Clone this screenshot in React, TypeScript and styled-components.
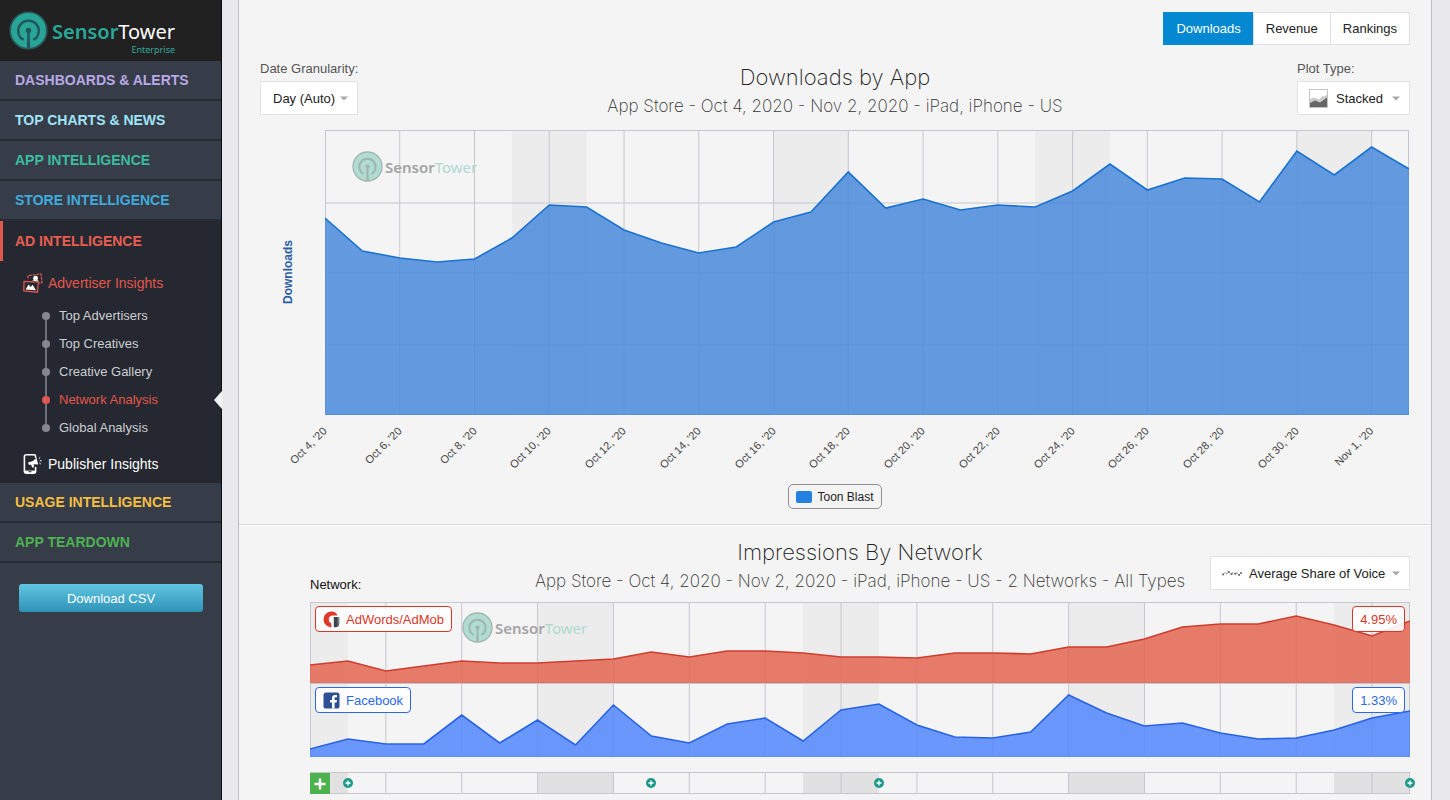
import React from "react";
import styled, { createGlobalStyle, css } from "styled-components";

const SANS = `"Helvetica Neue", "Liberation Sans", Arial, sans-serif`;
const LIGHT = `Inter, "Liberation Sans", sans-serif`;
const LOGO = `"Noto Sans", "Open Sans", sans-serif`;

const GlobalStyle = createGlobalStyle`
  *, *::before, *::after { box-sizing: border-box; }
  body { margin: 0; background: #e9e9ed; font-family: ${SANS}; font-size: 13px; color: #222; }
  button, select { font: inherit; color: inherit; }
  ul { list-style: none; margin: 0; padding: 0; }
  a { color: inherit; text-decoration: none; }
`;

const Page = styled.div`
  display: flex;
  height: 100vh;
  overflow: hidden;
`;

/* ---------- Sidebar ---------- */

const Sidebar = styled.aside`
  flex: 0 0 222px;
  background: #363c48;
  border-right: 1px solid #0c0d10;
`;

const Brand = styled.a`
  display: flex;
  align-items: center;
  gap: 4px;
  height: 61px;
  padding-left: 9px;
  background: #212121;
`;

const BrandText = styled.span`
  display: flex;
  flex-direction: column;
  align-items: flex-end;
  padding-top: 12px;
  font-family: ${LOGO};
`;

const BrandName = styled.span`
  font-size: 20px;
  line-height: 26px;
  color: #fff;
  b {
    font-weight: 600;
    color: #29a898;
  }
`;

const BrandTier = styled.span`
  font-size: 9px;
  line-height: 10px;
  color: #35a99a;
`;

const Category = styled.a<{ $color: string; $active?: boolean }>`
  display: flex;
  align-items: center;
  height: 40px;
  padding-left: 15px;
  font-size: 14px;
  font-weight: bold;
  color: ${(p) => p.$color};
  border-bottom: 2px solid #262b34;
  ${(p) =>
    p.$active &&
    css`
      padding-left: 12px;
      border-left: 3px solid #e2574c;
      border-bottom: 0;
    `}
`;

const OpenGroup = styled.div`
  background: #252830;
`;

const GroupLink = styled.a<{ $color: string }>`
  display: flex;
  align-items: center;
  gap: 5px;
  height: 41px;
  padding: 2px 0 0 23px;
  font-size: 14px;
  color: ${(p) => p.$color};
`;

const Leaf = styled.li<{ $current?: boolean }>`
  position: relative;
  height: 28px;
  padding-left: 59px;
  font-size: 13px;
  line-height: 28px;
  color: ${(p) => (p.$current ? "#e2574c" : "#ccced2")};

  &::before {
    content: "";
    position: absolute;
    left: 45px;
    top: 0;
    bottom: 0;
    width: 2px;
    background: #6d7077;
  }
  &:first-child::before { top: 14px; }
  &:last-child::before { bottom: 14px; }

  &::after {
    content: "";
    position: absolute;
    left: 42px;
    top: 10px;
    width: 8px;
    height: 8px;
    border-radius: 50%;
    background: ${(p) => (p.$current ? "#e2574c" : "#85888e")};
  }
`;

const Notch = styled.span`
  position: absolute;
  right: -1px;
  top: 5px;
  border: solid transparent;
  border-width: 9px 8px 9px 0;
  border-right-color: #f4f4f4;
`;

const CsvButton = styled.button`
  display: block;
  width: calc(100% - 37px);
  height: 28px;
  margin: 21px 18px 0 19px;
  padding: 0;
  border: 0;
  border-radius: 3px;
  background: linear-gradient(#5fc6e2, #2f93b6);
  color: #fff;
`;

/* ---------- Main panel ---------- */

const Panel = styled.main`
  flex: 1;
  min-width: 0;
  margin: 0 18px 0 16px;
  background: #f4f4f4;
  border: solid #bdbdc4;
  border-width: 0 1px;
`;

const Section = styled.section<{ $second?: boolean }>`
  ${(p) =>
    p.$second
      ? css`
          padding: 12px 21px 6px 71px;
          border-top: 1px solid #d9d9d9;
          box-shadow: inset 0 1px 0 #fff;
        `
      : css`
          padding: 12px 21px 15px;
        `}
`;

const Tabs = styled.div`
  display: flex;
  justify-content: flex-end;
`;

const Tab = styled.button<{ $active?: boolean }>`
  height: 33px;
  margin-left: -1px;
  padding: 0 12px;
  border: 1px solid ${(p) => (p.$active ? "#0388d1" : "#dfdfe2")};
  background: ${(p) => (p.$active ? "#0388d1" : "#fff")};
  color: ${(p) => (p.$active ? "#fff" : "#222")};
`;

const Head = styled.header<{ $alignEnd?: boolean }>`
  display: grid;
  grid-template-columns: 1fr auto 1fr;
  align-items: ${(p) => (p.$alignEnd ? "end" : "start")};
`;

const Titles = styled.div<{ $compact?: boolean }>`
  padding: ${(p) => (p.$compact ? "0 0 7px" : "17px 0 0")};
  text-align: center;
  font-family: ${LIGHT};
`;

const Title = styled.h2`
  margin: 0;
  font-size: 22px;
  font-weight: 200;
  line-height: 30px;
  color: #222;
`;

const Subtitle = styled.p`
  margin: 0;
  font-size: 17px;
  font-weight: 200;
  line-height: 28px;
  color: #333;
`;

const Field = styled.div<{ $end?: boolean }>`
  display: flex;
  flex-direction: column;
  align-items: flex-start;
  gap: 4px;
  padding-top: 16px;
  justify-self: ${(p) => (p.$end ? "end" : "start")};
  label {
    line-height: 16px;
    color: #555;
  }
`;

const SelectBox = styled.span<{ $width: number }>`
  display: grid;
  align-items: center;
  width: ${(p) => p.$width}px;
  height: 34px;
  > * {
    grid-area: 1 / 1;
  }
  > svg {
    pointer-events: none;
    z-index: 1;
  }
`;

const SelectInput = styled.select<{ $icon?: boolean }>`
  appearance: none;
  width: 100%;
  height: 100%;
  padding: 0 20px 0 ${(p) => (p.$icon ? 38 : 12)}px;
  border: 1px solid #e2e2e4;
  border-radius: 0;
  background: #fff;
  color: #222;
`;

const CaretSvg = styled.svg`
  justify-self: end;
  margin-right: 10px;
`;

const LeadIcon = styled.span`
  display: flex;
  margin-left: 12px;
  z-index: 1;
  pointer-events: none;
`;

const NetworkLabel = styled.h3`
  margin: 0;
  padding-bottom: 8px;
  font-size: 13px;
  font-weight: normal;
  line-height: 18px;
  color: #111;
`;

const VoiceField = styled.div`
  justify-self: end;
  padding-bottom: 12px;
`;

/* ---------- Charts ---------- */

const PlotRow = styled.div`
  display: flex;
  margin-top: 10px;
  padding-right: 1px;
`;

const YLabel = styled.div`
  flex: 0 0 65px;
  height: 285px;
  display: flex;
  align-items: center;
  padding-left: 21px;
  font-size: 12px;
  font-weight: bold;
  color: #2a5ea4;
  span {
    writing-mode: vertical-rl;
    transform: rotate(180deg);
  }
`;

const PlotColumn = styled.div`
  flex: 1;
  min-width: 0;
`;

const Plot = styled.div<{ $height: number }>`
  position: relative;
  height: ${(p) => p.$height}px;
`;

const ChartSvg = styled.svg`
  display: block;
  width: 100%;
  height: 100%;
`;

const Ticks = styled.div`
  display: flex;
  height: 69px;
  margin: 0 5px 0 -5px;
  padding-top: 9px;
`;

const Tick = styled.div`
  flex: 0 0 calc(200% / 29);
  display: flex;
`;

const TickText = styled.span`
  width: 0;
  display: flex;
  justify-content: flex-end;
  font-size: 11px;
  line-height: 14px;
  color: #444;
  span {
    white-space: nowrap;
    transform: rotate(-45deg);
    transform-origin: top right;
  }
`;

const Legend = styled.div`
  display: flex;
  justify-content: center;
`;

const LegendItem = styled.button`
  display: flex;
  align-items: center;
  gap: 5px;
  height: 25px;
  padding: 0 7px;
  border: 1px solid #909090;
  border-radius: 5px;
  background: transparent;
  font-size: 12px;
  color: #222;
`;

const Swatch = styled.span`
  width: 16px;
  height: 12px;
  border-radius: 2px;
  background: #2481e0;
`;

const Watermark = styled.div<{ $left: number; $top: number }>`
  position: absolute;
  left: ${(p) => p.$left}px;
  top: ${(p) => p.$top}px;
  display: flex;
  align-items: center;
  gap: 2px;
  font-family: ${LOGO};
  font-size: 15px;
  line-height: 30px;
  color: #aedace;
  b {
    font-weight: 600;
    color: #a3a3a5;
  }
`;

const Badge = styled.div<{ $color: string; $side: "left" | "right" }>`
  position: absolute;
  top: 4px;
  ${(p) => p.$side}: 5px;
  display: flex;
  align-items: center;
  gap: 6px;
  height: 26px;
  padding: 0 7px;
  border: 1px solid ${(p) => p.$color};
  border-radius: 4px;
  background: rgba(255, 255, 255, 0.9);
  font-size: 13px;
  color: ${(p) => p.$color};
`;

const Timeline = styled.div`
  position: relative;
  height: 22px;
  margin-top: 15px;
`;

const AddButton = styled.button`
  position: absolute;
  left: 0;
  top: 1px;
  width: 20px;
  height: 21px;
  display: grid;
  place-items: center;
  padding: 0;
  border: 0;
  background: #4db34f;
`;

const Marker = styled.button`
  position: absolute;
  top: 6px;
  width: 10px;
  height: 10px;
  margin-left: -5px;
  display: flex;
  padding: 0;
  border: 0;
  border-radius: 50%;
  background: #1d998b;
`;

/* ---------- Drawings ---------- */

function TowerMark({ size, fill, line, rim }: { size: number; fill: string; line: string; rim: string }) {
  return (
    <svg width={size} height={size} viewBox="0 0 38 38" aria-hidden="true">
      <circle cx="19" cy="19" r="17.8" fill={fill} stroke={rim} strokeWidth="1.6" />
      <path d="M14.2 28.200A10 10 0 1 1 23.800 28.200" fill="none" stroke={line} strokeWidth="2.400" />
      <circle cx="19" cy="19" r="2.600" fill={line} />
      <path d="M17.900 19h2.200l.5 17.400h-3.200z" fill={line} />
    </svg>
  );
}

function PhotosIcon() {
  return (
    <svg width="20" height="20" viewBox="0 0 20 20" fill="none" aria-hidden="true">
      <path d="M5 5.6V2.6L18 .9l1 8.8-3 .3" stroke="#e2574c" strokeWidth="1.2" strokeDasharray="3 .8" />
      <circle cx="12.6" cy="5.2" r="2.4" fill="#fff" />
      <path d="M9 7.2l3-1 4 1.8-1 .8z" fill="#fff" />
      <path d="M1 8.400l14.400.8-1 10L.8 17.800z" fill="#252830" stroke="#e2574c" strokeWidth="1.300" />
      <path d="M2.600 16.600l3-5.200 2.200 2.600 1.800-2.200 3.400 5.400z" fill="#fff" />
    </svg>
  );
}

function PhoneIcon() {
  return (
    <svg width="20" height="20" viewBox="0 0 20 20" fill="none" aria-hidden="true">
      <path d="M12.6 4V2.4A1.6 1.6 0 0 0 11 .8H3A1.6 1.6 0 0 0 1.4 2.4v15.2A1.6 1.6 0 0 0 3 19.2h8a1.6 1.6 0 0 0 1.6-1.6V13" stroke="#fff" strokeWidth="1.6" />
      <path d="M1.4 16.6h11.2v2.4H1.4z" fill="#fff" />
      <path d="M5.5 17.2h3v1h-3z" fill="#252830" />
      <path d="M5 8.6l5-1.6 3.4-3.2 1.8 6.6-4.6-.2.6 3-2 .4-1.2-3.2-2 .6z" fill="#fff" />
      <path d="M15.8 4.6l1.4-1.2M16.8 6.8h1.8M16.4 9l1.4 1" stroke="#fff" strokeWidth="1" />
    </svg>
  );
}

function StackedIcon() {
  return (
    <svg width="19" height="19" viewBox="0 0 19 19" aria-hidden="true">
      <rect x=".5" y=".5" width="18" height="18" fill="#fff" stroke="#c4c4c4" />
      <path d="M1 10l4-1.5 5 2 3-3.5 2 .5 3-2V14H1z" fill="#ccc" />
      <path d="M1 14l5-2.6 5 2.2 7-5V18H1z" fill="#666" />
    </svg>
  );
}

function WaveIcon() {
  return (
    <svg width="20" height="7" viewBox="0 0 20 7" fill="none" aria-hidden="true">
      <path d="M1 4.4L3 2.6l2 1.6 1.6-2.6L9 4l2-1.4L13 4l2-1.2L17 5l2-2" stroke="#888" strokeWidth="1" strokeDasharray="2.4 .6" />
      <g fill="#666">
        <circle cx="1" cy="4.4" r="1" />
        <circle cx="6.6" cy="1.8" r="1" />
        <circle cx="9.6" cy="4" r="1" />
        <circle cx="13.4" cy="3.8" r="1" />
        <circle cx="17" cy="5" r="1" />
        <circle cx="19" cy="3" r="1" />
      </g>
    </svg>
  );
}

function AdmobIcon() {
  return (
    <svg width="17" height="17" viewBox="0 0 17 17" aria-hidden="true">
      <path d="M8.200.6C11.400.4 13.400 1.800 14.600 4.600H9.400C6.800 4.800 5.800 6.600 5.800 8.600c0 2 1 3.400 2.600 3.800v4C3.800 16 .6 12.800.6 8.600.6 4.200 3.800.8 8.200.6z" fill="#dd3a2c" />
      <path d="M10.800 6h5.400v6.600a3.600 3.600 0 0 1-3.200 3.600h-2.200z" fill="#3b444b" />
      <path d="M14.600 6h1.600v6.600l-1.600 2.600z" fill="#78838a" />
    </svg>
  );
}

function FacebookIcon() {
  return (
    <svg width="17" height="17" viewBox="0 0 17 17" aria-hidden="true">
      <rect x=".5" y=".5" width="16" height="16" rx="2.6" fill="#2d4f94" />
      <path d="M9 16.5v-6H7V8h2V6.200C9 4 10.300 2.900 12.200 2.900h1.800v2.400h-1.200c-.9 0-1.200.4-1.200 1.200V8H14l-.4 2.500h-2v6z" fill="#fff" />
    </svg>
  );
}

function Caret() {
  return (
    <CaretSvg width="8" height="5" viewBox="0 0 8 5" aria-hidden="true">
      <path d="M0 .5h8L4 4.500z" fill="#a8a8a8" />
    </CaretSvg>
  );
}

/* ---------- Chart data ---------- */

const DAYS = 29;
const STEP = 10;
const WIDTH = DAYS * STEP;

const downloads = [
  197, 164, 157, 153, 156, 177, 210, 208, 185, 172, 162, 168, 193, 203, 243, 207, 216, 205, 210, 208, 224, 251, 225,
  237, 236, 213, 264, 240, 268, 246,
];
const adwords = [
  18, 22, 12, 17, 22, 20, 20, 22, 24, 31, 26, 32, 32, 30, 26, 26, 25, 30, 30, 29, 36, 36, 44, 56, 59, 59, 67, 58, 47,
  62,
];
const facebook = [
  8, 18, 13, 13, 42, 14, 37, 12, 52, 21, 14, 33, 39, 16, 47, 53, 32, 20, 19, 25, 62, 44, 31, 34, 24, 18, 19, 27, 39,
  46,
];

interface AreaProps {
  height: number;
  values?: number[];
  bands: [number, number][];
  rows?: number[];
  fill?: string;
  stroke?: string;
  bandFill?: string;
}

function AreaChart({ height, values, bands, rows = [], fill, stroke, bandFill = "#ececec" }: AreaProps) {
  const line = values?.map((v, i) => `${i * STEP},${height - v}`).join(" ");
  const area = `0,${height} ${line} ${WIDTH},${height}`;
  const edge = { stroke: "#c6c7ce", strokeWidth: 1, vectorEffect: "non-scaling-stroke" as const };
  const columns = Array.from({ length: 15 }, (_, i) => i * 2);
  return (
    <ChartSvg viewBox={`0 0 ${WIDTH} ${height}`} preserveAspectRatio="none" role="img">
      {bands.map(([a, b]) => (
        <rect key={a} x={a * STEP} y="0" width={(b - a) * STEP} height={height} fill={bandFill} />
      ))}
      {columns.map((c) => (
        <line key={c} x1={c * STEP} x2={c * STEP} y1="0" y2={height} {...edge} />
      ))}
      {rows.map((y) => (
        <line key={y} x1="0" x2={WIDTH} y1={y} y2={y} {...edge} />
      ))}
      <rect x="0" y="0" width={WIDTH} height={height} fill="none" {...edge} strokeWidth={2} />
      {line && (
        <>
          <polygon points={area} fill="#f4f4f4" fillOpacity="0.5" />
          <polygon points={area} fill={fill} fillOpacity="0.65" />
          <polyline points={line} fill="none" stroke={stroke} strokeWidth="1.600" vectorEffect="non-scaling-stroke" />
        </>
      )}
    </ChartSvg>
  );
}

function Mark({ left, top }: { left: number; top: number }) {
  return (
    <Watermark $left={left} $top={top}>
      <TowerMark size={31} fill="#b0dcd1" line="#a0b4b0" rim="#a3b5b1" />
      <span>
        <b>Sensor</b>Tower
      </span>
    </Watermark>
  );
}

const tickLabels = [
  "Oct 4", "Oct 6", "Oct 8", "Oct 10", "Oct 12", "Oct 14", "Oct 16", "Oct 18",
  "Oct 20", "Oct 22", "Oct 24", "Oct 26", "Oct 28", "Oct 30", "Nov 1",
];

const mainBands: [number, number][] = [[5, 7], [12, 14], [19, 21], [26, 28]];
const networkBands: [number, number][] = [[0, 1], [6, 8], [13, 15], [20, 22], [27, 29]];
const leaves = ["Top Advertisers", "Top Creatives", "Creative Gallery", "Network Analysis", "Global Analysis"];

export default function App() {
  return (
    <Page>
      <GlobalStyle />
      <Sidebar>
        <Brand href="#">
          <TowerMark size={39} fill="#27a596" line="#24555a" rim="#2b5a5c" />
          <BrandText>
            <BrandName>
              <b>Sensor</b>Tower
            </BrandName>
            <BrandTier>Enterprise</BrandTier>
          </BrandText>
        </Brand>
        <nav>
          <Category href="#" $color="#b9a9e6">DASHBOARDS &amp; ALERTS</Category>
          <Category href="#" $color="#a0e4f8">TOP CHARTS &amp; NEWS</Category>
          <Category href="#" $color="#3cbd9f">APP INTELLIGENCE</Category>
          <Category href="#" $color="#40abdc">STORE INTELLIGENCE</Category>
          <OpenGroup>
            <Category href="#" $color="#ea5e50" $active>AD INTELLIGENCE</Category>
            <GroupLink href="#" $color="#e2574c">
              <PhotosIcon />
              Advertiser Insights
            </GroupLink>
            <ul>
              {leaves.map((name) => {
                const current = name === "Network Analysis";
                return (
                  <Leaf key={name} $current={current}>
                    <a href="#">{name}</a>
                    {current && <Notch />}
                  </Leaf>
                );
              })}
            </ul>
            <GroupLink href="#" $color="#fff">
              <PhoneIcon />
              Publisher Insights
            </GroupLink>
          </OpenGroup>
          <Category href="#" $color="#f5bf41">USAGE INTELLIGENCE</Category>
          <Category href="#" $color="#4fb153">APP TEARDOWN</Category>
        </nav>
        <CsvButton type="button">Download CSV</CsvButton>
      </Sidebar>

      <Panel>
        <Section>
          <Tabs>
            <Tab type="button" $active>Downloads</Tab>
            <Tab type="button">Revenue</Tab>
            <Tab type="button">Rankings</Tab>
          </Tabs>
          <Head>
            <Field>
              <label htmlFor="granularity">Date Granularity:</label>
              <SelectBox $width={98}>
                <SelectInput id="granularity">
                  <option>Day (Auto)</option>
                </SelectInput>
                <Caret />
              </SelectBox>
            </Field>
            <Titles>
              <Title>Downloads by App</Title>
              <Subtitle>App Store - Oct 4, 2020 - Nov 2, 2020 - iPad, iPhone - US</Subtitle>
            </Titles>
            <Field $end>
              <label htmlFor="plot">Plot Type:</label>
              <SelectBox $width={113}>
                <SelectInput id="plot" $icon>
                  <option>Stacked</option>
                </SelectInput>
                <LeadIcon><StackedIcon /></LeadIcon>
                <Caret />
              </SelectBox>
            </Field>
          </Head>
          <PlotRow>
            <YLabel>
              <span>Downloads</span>
            </YLabel>
            <PlotColumn>
              <Plot $height={285}>
                <AreaChart
                  height={285}
                  values={downloads}
                  bands={mainBands}
                  rows={[73, 143, 215]}
                  fill="#166ad4"
                  stroke="#1a72d0"
                />
                <Mark left={27} top={21} />
              </Plot>
              <Ticks>
                {tickLabels.map((t) => (
                  <Tick key={t}>
                    <TickText>
                      <span>{t}, '20</span>
                    </TickText>
                  </Tick>
                ))}
              </Ticks>
            </PlotColumn>
          </PlotRow>
          <Legend>
            <LegendItem type="button">
              <Swatch />
              Toon Blast
            </LegendItem>
          </Legend>
        </Section>

        <Section $second>
          <Head $alignEnd>
            <NetworkLabel>Network:</NetworkLabel>
            <Titles $compact>
              <Title>Impressions By Network</Title>
              <Subtitle>App Store - Oct 4, 2020 - Nov 2, 2020 - iPad, iPhone - US - 2 Networks - All Types</Subtitle>
            </Titles>
            <VoiceField>
              <SelectBox $width={200}>
                <SelectInput aria-label="Metric" $icon>
                  <option>Average Share of Voice</option>
                </SelectInput>
                <LeadIcon><WaveIcon /></LeadIcon>
                <Caret />
              </SelectBox>
            </VoiceField>
          </Head>
          <Plot $height={81}>
            <AreaChart height={81} values={adwords} bands={networkBands} fill="#e13a21" stroke="#cf3d2e" />
            <Mark left={152} top={10} />
            <Badge $color="#d9372a" $side="left">
              <AdmobIcon />
              AdWords/AdMob
            </Badge>
            <Badge $color="#d9372a" $side="right">4.95%</Badge>
          </Plot>
          <Plot $height={74}>
            <AreaChart height={74} values={facebook} bands={networkBands} fill="#2066ff" stroke="#2763e4" />
            <Badge $color="#2c68e8" $side="left">
              <FacebookIcon />
              Facebook
            </Badge>
            <Badge $color="#2c68e8" $side="right">1.33%</Badge>
          </Plot>
          <Timeline>
            <AreaChart height={22} bands={networkBands} bandFill="#e1e1e1" />
            <AddButton type="button" aria-label="Add event">
              <svg width="12" height="12" viewBox="0 0 12 12">
                <path d="M6 .5v11M.5 6h11" stroke="#fff" strokeWidth="2.400" />
              </svg>
            </AddButton>
            {[1, 9, 15, 29].map((day) => (
              <Marker key={day} type="button" aria-label="Event" style={{ left: `${(day / DAYS) * 100}%` }}>
                <svg width="10" height="10" viewBox="0 0 10 10">
                  <path d="M5 2.500v5M2.500 5h5" stroke="#fff" strokeWidth="1.300" />
                </svg>
              </Marker>
            ))}
          </Timeline>
        </Section>
      </Panel>
    </Page>
  );
}
